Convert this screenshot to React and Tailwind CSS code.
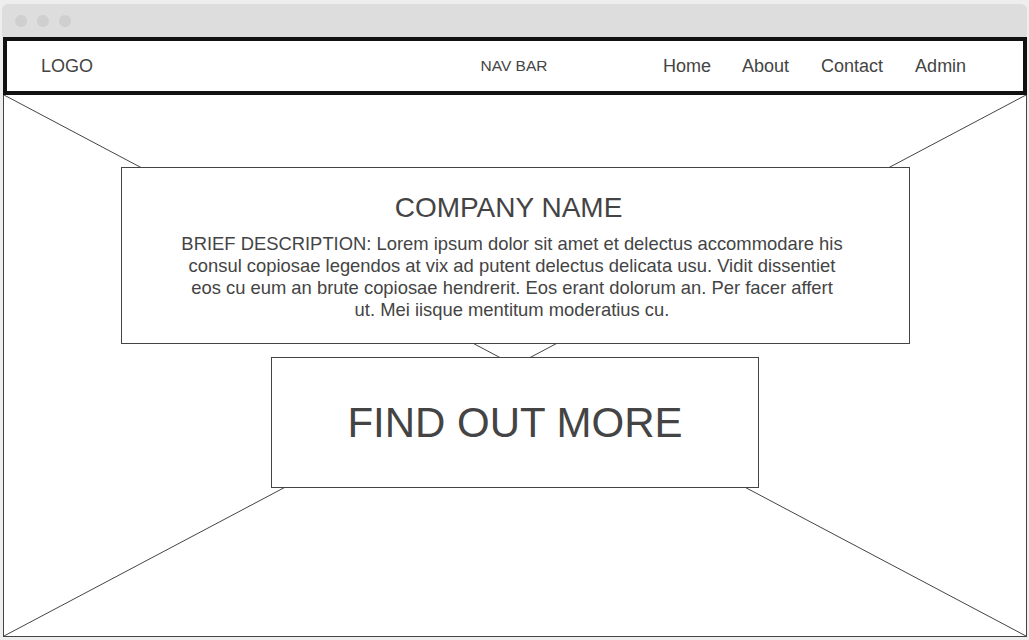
export default function App() {
  const font = { fontFamily: '"Liberation Sans", Arial, sans-serif' };
  return (
    <div className="w-[1029px] h-[640px] bg-[#eeeeee] overflow-hidden pt-[4px] pl-[2px]" style={font}>
      <div className="w-[1025px] h-[33px] bg-[#dddddd] rounded-t-[6px] flex items-center gap-[10px] pl-[13px]">
        <span className="w-[12px] h-[12px] rounded-full bg-[#cfcfcf]" />
        <span className="w-[12px] h-[12px] rounded-full bg-[#cfcfcf]" />
        <span className="w-[12px] h-[12px] rounded-full bg-[#cfcfcf]" />
      </div>
      <div className="ml-[1px] w-[1024px] h-[58px] border-4 border-[#111111] bg-white flex items-center text-[#444444]">
        <div className="w-[437px] pl-[34px] text-[18px]">LOGO</div>
        <div className="w-[140px] text-center text-[15.5px]">NAV BAR</div>
        <div className="flex text-[18px] pl-[79px]">
          <span>Home</span>
          <span className="ml-[31px]">About</span>
          <span className="ml-[32px]">Contact</span>
          <span className="ml-[32px]">Admin</span>
        </div>
      </div>
      <div className="relative ml-[1px] w-[1024px] h-[542px] bg-white border-x border-b border-[#444444] pt-[72px] text-[#444444]">
        <svg className="absolute inset-0 w-full h-full" viewBox="0 0 1022 541" preserveAspectRatio="none">
          <line x1="0" y1="0" x2="1022" y2="541" stroke="#444" strokeWidth="1" />
          <line x1="1022" y1="0" x2="0" y2="541" stroke="#444" strokeWidth="1" />
        </svg>
        <div className="relative mx-auto w-[789px] h-[177px] bg-white border border-[#444444] pt-[25px]">
          <div className="text-center text-[28px] leading-[30px] pr-[13px]">COMPANY NAME</div>
          <p className="mt-[10px] ml-[58px] w-[665px] text-center text-[18.4px] leading-[22px]">
            BRIEF DESCRIPTION: Lorem ipsum dolor sit amet et delectus accommodare his consul copiosae legendos at vix ad putent delectus delicata usu. Vidit dissentiet eos cu eum an brute copiosae hendrerit. Eos erant dolorum an. Per facer affert ut. Mei iisque mentitum moderatius cu.
          </p>
        </div>
        <div className="relative mt-[13px] mx-auto w-[488px] h-[131px] bg-white border border-[#444444] flex items-center justify-center text-[42px] leading-none">
          FIND OUT MORE
        </div>
      </div>
    </div>
  );
}
